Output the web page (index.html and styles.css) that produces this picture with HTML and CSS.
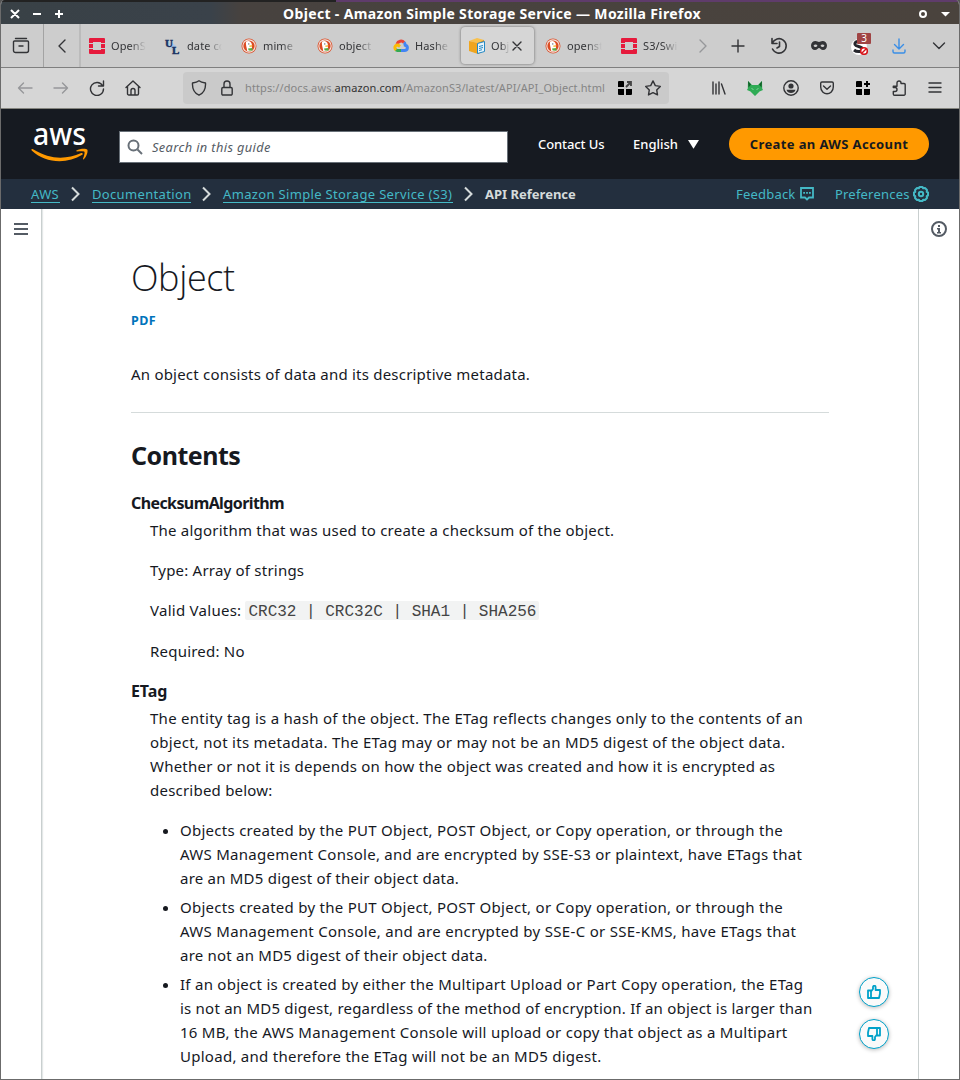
FILE: index.html
```html
<!DOCTYPE html>
<html lang="en">
<head>
<meta charset="utf-8">
<title>Object - Amazon Simple Storage Service</title>
<link rel="stylesheet" href="styles.css">
</head>
<body>
<svg class="defs" width="0" height="0">
  <symbol id="duck" viewBox="0 0 16 16"><circle cx="8" cy="8" r="7.500" fill="#d9512c"/><circle cx="8" cy="8" r="6.700" fill="#f3e6e0"/><circle cx="8" cy="8" r="5.600" fill="#dc4b22"/><path d="M5.200 3.600C7 2.400 10 3 10.800 6c.2 1.600-.2 2 .2 4l.2 2.500c-1.500 1-3.800 1-5.100.2C6 10 4.200 6 5.200 3.600z" fill="#fff"/><path d="M8.300 7.500l3.200-.3-.5 1.300-2.500.4z" fill="#f5b92d"/><path d="M7 10.500l4.500-.5-.2 2.800-3.600-.2z" fill="#57ab45"/><circle cx="7.800" cy="5.900" r=".6" fill="#345"/></symbol>
  <symbol id="openstack" viewBox="0 0 16 16"><path fill="#e61a3c" d="M1 0h14a1 1 0 0 1 1 1v4h-4V4H4v1H0V1a1 1 0 0 1 1-1zM0 6h4v4H0zM12 6h4v4h-4zM0 11h4v1h8v-1h4v4a1 1 0 0 1-1 1H1a1 1 0 0 1-1-1z"/></symbol>
</svg>
<div class="window">
  <div class="titlebar">
    <svg class="win-left" width="56" height="10" viewBox="0 0 56 10"><path d="M1 1l8 8M9 1L1 9M23 5h8M45 5h8M49 1v8" stroke="#fff" stroke-width="2" fill="none"/></svg>
    <div class="win-title">Object - Amazon Simple Storage Service — Mozilla Firefox</div>
    <svg class="win-right" width="32" height="10" viewBox="0 0 32 10"><circle cx="5" cy="5" r="3" stroke="#fff" stroke-width="2" fill="none"/><path d="M23 3h9l-4.500 4.500z" fill="#fff"/></svg>
  </div>

  <div class="tabbar">
    <div class="tab-view"><svg class="ic" width="18" height="18" viewBox="0 0 18 18"><path d="M3.500 1.500h11M2.500 4h13a1 1 0 0 1 1 1v8.500a2 2 0 0 1-2 2h-11a2 2 0 0 1-2-2V5a1 1 0 0 1 1-1zM7 9h4"/></svg></div>
    <div class="tab-prev"><svg class="ic" width="10" height="14" viewBox="0 0 10 14"><path d="M8 1L2 7l6 6"/></svg></div>
    <div class="tabs">
      <div class="tab"><svg width="16" height="16"><use href="#openstack"/></svg><span class="label">OpenS</span></div>
      <div class="tab"><svg class="ul" width="16" height="16" viewBox="0 0 16 16"><path d="M5 3l6 5-2 6-5-6z" fill="#a9c6e8"/><text x="0" y="8.500" class="ul-mark">U</text><text x="7" y="15.500" class="ul-mark">L</text></svg><span class="label">date co</span></div>
      <div class="tab"><svg width="16" height="16"><use href="#duck"/></svg><span class="label">mime</span></div>
      <div class="tab"><svg width="16" height="16"><use href="#duck"/></svg><span class="label">object</span></div>
      <div class="tab"><svg width="16" height="16" viewBox="0 0 16 16" fill="none" stroke-width="3"><path d="M4 6C5 3 9 2 11 4.500" stroke="#ea4335"/><path d="M11 4.500c1 .8 1 1.500 1.200 2.700 3 .6 3 5.300-.8 5.300H8" stroke="#4285f4"/><path d="M8 12.500H4.500l-2-.9" stroke="#34a853"/><path d="M3 12C1 10 2 6.500 5 7l2 1.500" stroke="#fbbc05"/></svg><span class="label">Hashe</span></div>
      <div class="tab active"><svg width="16" height="16" viewBox="0 0 16 16"><path d="M0 3l8-3 7 2-6 3z" fill="#f9c14d"/><path d="M0 3l9 2v11l-9-3z" fill="#f0a51e"/><path d="M9 5l6-3v11l-6 3z" fill="#d98c15"/><path d="M8.500 5.500l7-2v10l-7 2z" fill="#e8f5fc" stroke="#2489c5"/><path d="M10 8.500l4-1M10 10.500l4-1M10 12.500l3-.8" stroke="#2489c5"/></svg><span class="label">Obj</span><svg class="ic close" width="10" height="10" viewBox="0 0 10 10"><path d="M1 1l8 8M9 1L1 9"/></svg></div>
      <div class="tab"><svg width="16" height="16"><use href="#duck"/></svg><span class="label">openst</span></div>
      <div class="tab"><svg width="16" height="16"><use href="#openstack"/></svg><span class="label">S3/Swi</span></div>
    </div>
    <div class="tab-next"><svg class="ic dim" width="10" height="14" viewBox="0 0 10 14"><path d="M2 1l6 6-6 6"/></svg></div>
    <div class="tab-tools">
      <div><svg class="ic" width="14" height="14" viewBox="0 0 14 14"><path d="M7 1v12M1 7h12"/></svg></div>
      <div><svg class="ic" width="18" height="18" viewBox="0 0 18 18"><path d="M2 1.500v5h5M2.300 6.200A7.200 7.200 0 1 1 2.500 12M9.500 5v4.500L7 11" stroke-width="1.600"/></svg></div>
      <div><svg width="16" height="12" viewBox="0 0 16 12"><path fill="#333437" fill-rule="evenodd" d="M4.500 1C6 1 7 2 8 2s2-1 3.500-1C14 1 16 3 16 5.500S14.500 10 12 10c-2 0-3-2-4-2s-2 2-4 2C1.500 10 0 8 0 5.500S2 1 4.500 1zM2.500 5.700c1 1.800 3 1.700 4 .1C5.500 4 3.500 4 2.500 5.700zm11 0c-1-1.700-3-1.700-4 .1 1 1.600 3 1.700 4-.1z"/></svg></div>
      <div class="stylus"><svg width="18" height="18" viewBox="0 0 18 18"><circle cx="8" cy="10" r="8" fill="#fff"/><path d="M12 6C9 3 3 4.500 4 7.500 5 10 11 9 11.500 12S6 15.500 3 13" fill="none" stroke="#26262c" stroke-width="3"/><circle cx="13" cy="14" r="3.300" fill="#fff" stroke="#d7141a" stroke-width="1.600"/><path d="M11 16l4-4" stroke="#d7141a" stroke-width="1.500"/></svg><span class="badge">3</span></div>
      <div><svg class="ic blue" width="14" height="16" viewBox="0 0 14 16"><path d="M7 1v10M2.500 6.500L7 11l4.500-4.500M1 12v1.500A1.500 1.500 0 0 0 2.500 15h9a1.500 1.500 0 0 0 1.500-1.500V12"/></svg></div>
      <div><svg class="ic" width="14" height="8" viewBox="0 0 14 8"><path d="M1.500 1L7 6.500 12.500 1"/></svg></div>
    </div>
  </div>

  <div class="navbar">
    <div class="nav-left">
      <div><svg class="ic dim" width="16" height="12" viewBox="0 0 16 12"><path d="M15 6H1.500M6.500 1l-5 5 5 5"/></svg></div>
      <div><svg class="ic dim" width="16" height="12" viewBox="0 0 16 12"><path d="M1 6h13.500M9.500 1l5 5-5 5"/></svg></div>
      <div><svg class="ic" width="16" height="16" viewBox="0 0 16 16"><path d="M13.500 5.500A6.500 6.500 0 1 0 14.500 9M14.500 1v5h-5"/></svg></div>
      <div><svg class="ic" width="16" height="16" viewBox="0 0 16 16"><path d="M1 7.500L8 1l7 6.500M2.500 6.500v7.200a1.300 1.300 0 0 0 1.300 1.300h8.400a1.300 1.300 0 0 0 1.300-1.300V6.500M6 15v-4.500a2 2 0 0 1 4 0V15"/></svg></div>
    </div>
    <div class="urlbar">
      <svg class="ic" width="16" height="16" viewBox="0 0 16 16"><path d="M8 .8c2 1.500 4.500 1.900 6.500 2.200.3 5-1.500 10-6.500 12.200C3 13 1.200 8 1.500 3 3.500 2.700 6 2.300 8 .8z"/></svg>
      <svg class="ic" width="12" height="16" viewBox="0 0 12 16"><path d="M2 7.500h8a1.200 1.200 0 0 1 1.200 1.200v5.100A1.200 1.200 0 0 1 10 15H2a1.200 1.200 0 0 1-1.200-1.200V8.700A1.200 1.200 0 0 1 2 7.500zM3 7.500V4a3 3 0 0 1 6 0v3.500"/></svg>
      <div class="url">https://docs.aws.<b>amazon.com</b>/AmazonS3/latest/API/API_Object.html</div>
      <svg class="grid-ic" width="14" height="14" viewBox="0 0 14 14"><path d="M1 0h4a1 1 0 0 1 1 1v5H0V1a1 1 0 0 1 1-1zM0 8h6v6H1a1 1 0 0 1-1-1zM8 8h6v5a1 1 0 0 1-1 1H8z"/><path d="M8 6l5-5M9 1h4v4" fill="none" stroke="#444" stroke-width="1.800"/></svg>
      <svg class="ic" width="18" height="16" viewBox="0 0 18 16"><path d="M9 .9l2.300 4.700 5 .8-3.600 3.500.8 5L9 12.600 4.500 14.900l.8-5L1.700 6.400l5-.8z"/></svg>
    </div>
    <div class="nav-right">
      <div><svg class="ic" width="14" height="14" viewBox="0 0 14 14"><path d="M1 1v12M4 3v10M7 1v12M9.500 3l3.500 10"/></svg></div>
      <div><svg width="16" height="15" viewBox="0 0 16 15"><path d="M1 0l4 4h6l4-4 .2 7.500.8 1.500-3.500 1.500L8 15l-4.500-4.500L0 9l.8-1.500z" fill="#2fab55"/><path d="M1 0l3 3.500-2.500 3zM15 0l-3 3.500 2.500 3z" fill="#12602a"/><path d="M4.500 7.500L6.500 8.500M11.500 7.500L9.500 8.500" stroke="#7fd698"/></svg></div>
      <div><svg class="ic" width="16" height="16" viewBox="0 0 16 16"><circle cx="8" cy="8" r="7.200"/><circle cx="8" cy="6" r="2.600" fill="#333437" stroke="none"/><path d="M3.500 9.800h9C12 12 10 13 8 13s-4-1-4.500-3.200z" fill="#333437" stroke="none"/></svg></div>
      <div><svg class="ic" width="14" height="14" viewBox="0 0 14 14"><path d="M2 1h10a1.300 1.300 0 0 1 1.300 1.300V6C13.300 10 10 12.800 7 12.800S.7 10 .7 6V2.300A1.300 1.300 0 0 1 2 1zM3.500 5L7 8.300 10.500 5"/></svg></div>
      <div><svg class="grid-ic" width="14" height="14" viewBox="0 0 14 14"><path d="M1 0h4a1 1 0 0 1 1 1v5H0V1a1 1 0 0 1 1-1zM0 8h6v6H1a1 1 0 0 1-1-1zM8 8h6v5a1 1 0 0 1-1 1H8zM10 0h2v2h2v2h-2v2h-2V4H8V2h2z"/></svg></div>
      <div><svg class="ic" width="15" height="16" viewBox="0 0 15 16"><path d="M5 3.500V3a2 2 0 0 1 4 0v.5h3a1.200 1.200 0 0 1 1.200 1.200V14a1.200 1.200 0 0 1-1.200 1.200H2.500A1.200 1.200 0 0 1 1.300 14v-2.500H3a2 2 0 0 0 0-4H1.300V6.200H5z"/></svg></div>
      <div><svg class="ic" width="14" height="12" viewBox="0 0 14 12"><path d="M1 1h12M1 5.500h12M1 10h12"/></svg></div>
    </div>
  </div>

  <header class="masthead">
    <svg class="logo" width="58" height="38" viewBox="0 0 58 38"><text x="2" y="20" textLength="53" lengthAdjust="spacingAndGlyphs" class="logo-text">aws</text><path d="M.3 24.500c.3-.7 1-.7 1.700-.2C20 35 35 34.500 50.300 28c1.200-.5 2.200.8 1 1.800C36 39.500 14 38.500.7 25.500z" fill="#ff9900"/><path d="M45.500 25.500c3-2 9.500-2.400 10.700-1 1.200 1.500-.6 7.500-3.500 9.700-.5.400-1 .1-.7-.5 1-2.200 2-6 1.400-6.900-.8-.9-5-.6-7.400-.4-.8 0-1-.5-.5-.9z" fill="#ff9900"/></svg>
    <div class="search"><svg width="16" height="16" viewBox="0 0 16 16" fill="none" stroke="#687078" stroke-width="2"><circle cx="6.500" cy="6.500" r="5"/><path d="M10.500 10.500l4.500 4.500"/></svg><span>Search in this guide</span></div>
    <span class="contact">Contact Us</span>
    <span class="lang">English</span>
    <svg class="caret" width="11" height="9" viewBox="0 0 11 9"><path d="M0 0h11L5.500 8.800z" fill="#fff"/></svg>
    <div class="cta"><span>Create an AWS Account</span></div>
  </header>

  <nav class="crumbs">
    <a class="c1">AWS</a><svg class="sep" width="9" height="16" viewBox="0 0 9 16"><path d="M1 1.500L7.500 8 1 14.500"/></svg>
    <a class="c2">Documentation</a><svg class="sep" width="9" height="16" viewBox="0 0 9 16"><path d="M1 1.500L7.500 8 1 14.500"/></svg>
    <a class="c3">Amazon Simple Storage Service (S3)</a><svg class="sep" width="9" height="16" viewBox="0 0 9 16"><path d="M1 1.500L7.500 8 1 14.500"/></svg>
    <b>API Reference</b>
    <div class="crumb-tools">
      <span class="fb">Feedback</span><svg width="14" height="14" viewBox="0 0 14 14"><path d="M1 1h12v9.500H9l-2 2-2-2H1z" fill="none" stroke="#44b9c6" stroke-width="1.800"/><path d="M3.200 5h1.800v1.800H3.200zM6.100 5h1.800v1.800H6.100zM9 5h1.800v1.800H9z" fill="#44b9c6"/></svg>
      <span class="pref">Preferences</span><svg width="16" height="16" viewBox="0 0 16 16" fill="none" stroke="#44b9c6"><path stroke-width="2" stroke-linejoin="round" d="M6.500 1h3l.6 1.300 1.900-.3 2 2-.3 1.900 1.300.6v3l-1.300.6.3 1.900-2 2-1.900-.3-.6 1.300h-3l-.6-1.300-1.900.3-2-2 .3-1.900L1 9.500v-3l1.300-.6L2 4l2-2 1.900.3z"/><circle cx="8" cy="8" r="2.200" stroke-width="2"/></svg>
    </div>
  </nav>

  <div class="page">
    <aside class="rail left"><svg width="14" height="12" viewBox="0 0 14 12"><path d="M0 1h14M0 6h14M0 11h14" stroke="#545b64" stroke-width="2"/></svg></aside>
    <main>
      <h1>Object</h1>
      <a class="pdf">PDF</a>
      <p class="intro">An object consists of data and its descriptive metadata.</p>
      <h2>Contents</h2>
      <dl>
        <dt>ChecksumAlgorithm</dt>
        <dd>
          <p class="tight">The algorithm that was used to create a checksum of the object.</p>
          <p class="tight">Type: Array of strings</p>
          <p class="values"><span>Valid Values:</span><code>CRC32 | CRC32C | SHA1 | SHA256</code></p>
          <p class="tight">Required: No</p>
        </dd>
        <dt class="short">ETag</dt>
        <dd>
          <p>The entity tag is a hash of the object. The ETag reflects changes only to the contents of an<br>object, not its metadata. The ETag may or may not be an MD5 digest of the object data.<br><span class="tight">Whether or not it is depends on how the object was created and how it is encrypted as</span><br><span class="tight">described below:</span></p>
          <ul>
            <li>Objects created by the PUT Object, POST Object, or Copy operation, or through the<br>AWS Management Console, and are encrypted by SSE-S3 or plaintext, have ETags that<br><span class="tight">are an MD5 digest of their object data.</span></li>
            <li>Objects created by the PUT Object, POST Object, or Copy operation, or through the<br><span class="loose">AWS Management Console, and are encrypted by SSE-C or SSE-KMS, have ETags that</span><br><span class="tight">are not an MD5 digest of their object data.</span></li>
            <li>If an object is created by either the Multipart Upload or Part Copy operation, the ETag<br><span class="tight">is not an MD5 digest, regardless of the method of encryption. If an object is larger than</span><br>16 MB, the AWS Management Console will upload or copy that object as a Multipart<br>Upload, and therefore the ETag will not be an MD5 digest.</li>
          </ul>
        </dd>
      </dl>
    </main>
    <aside class="rail right"><svg width="16" height="16" viewBox="0 0 16 16"><circle cx="8" cy="8" r="7" fill="none" stroke="#545b64" stroke-width="2"/><path d="M7 4h2v2H7zM6 7h3v4h1v1.500H6V11h1V8.500H6z" fill="#545b64"/></svg></aside>
    <div class="votes">
      <div class="vote"><svg width="14" height="14" viewBox="0 0 14 14"><path d="M1 5.500h3V13H1zM4 6.500L6 4V2a1.300 1.300 0 0 1 2.600 0v3H13v3.500l-1 4.500H4"/></svg></div>
      <div class="vote"><svg width="14" height="14" viewBox="0 0 14 14"><path d="M13 8.500h-3V1h3zM10 7.500L8 10v2a1.300 1.300 0 0 1-2.600 0V9H1V5.500L2 1h8"/></svg></div>
    </div>
  </div>
</div>
</body>
</html>
```
FILE: styles.css
```css
* { box-sizing: border-box; }
body { margin: 0; background: #555; font-family: "Noto Sans", sans-serif; }
svg { display: block; flex: none; }
.defs { position: absolute; }
.window { width: 960px; height: 1080px; border: 1px solid #6b6b6b; border-top: 0; border-radius: 5px 5px 0 0; overflow: hidden; background: #fff; display: flex; flex-direction: column; }

.titlebar { height: 24px; flex: none; display: flex; align-items: center; padding: 2px 9px 0; background: linear-gradient(90deg, #394146 0, #3a424a 210px, #47423f 240px, #4a433d 100%); border-top: 2px solid #5a3b66; border-image: linear-gradient(90deg, #222 35%, #5f3c6b 35%) 1; color: #fff; }
.win-title { flex: 1; padding-left: 6px; text-align: center; font-weight: 700; font-size: 14px; line-height: 20px; letter-spacing: .34px; white-space: nowrap; }
.win-right { margin-left: 6px; }

.ic { fill: none; stroke: #333437; stroke-width: 1.400; stroke-linecap: round; stroke-linejoin: round; }
.ic.dim { stroke: #96979a; }
.ic.blue { stroke: #3a8ee6; }
.tabbar { height: 44px; flex: none; display: flex; background: #cdcdcd; border-bottom: 1px solid #7f7f7f; }
.tab-view, .tab-prev, .tab-next { display: flex; align-items: center; justify-content: center; }
.tab-view { width: 43px; padding-right: 2px; border-right: 1px solid #a3a3a3; }
.tab-prev { width: 37px; border-right: 2px solid #bbb; }
.tabs { display: flex; }
.tab { width: 76px; height: 43px; padding-left: 8px; display: flex; align-items: center; gap: 6px; }
.label { width: 38px; white-space: nowrap; font-size: 11px; letter-spacing: .1px; color: #333437; -webkit-mask-image: linear-gradient(90deg, #000 50%, transparent 92%); mask-image: linear-gradient(90deg, #000 50%, transparent 92%); }
.active { width: 73px; height: 37px; margin: 3px 3px 3px 0; background: #d6d6d6; border-radius: 4px; box-shadow: 0 0 3px #666; }
.active .label { width: 20px; }
.close { margin-left: -5px; }
.ul { overflow: visible; }
.ul-mark { font: 700 11px "Liberation Serif", serif; fill: #1a3263; stroke: #1a3263; stroke-width: .5; }
.tab-next { width: 27px; }
.tab-tools { display: grid; grid-template-columns: 44px 38px 42px 40px 38px 41px; align-items: center; justify-items: center; }
.stylus { position: relative; }
.badge { position: absolute; left: 6px; top: -4px; width: 14px; height: 11px; background: #a04444; color: #fff; font-size: 10px; line-height: 11px; text-align: center; border-radius: 1px; }

.navbar { height: 41px; flex: none; display: flex; align-items: center; background: #d6d6d6; border-bottom: 1px solid #85857f; }
.nav-left { display: grid; grid-template-columns: repeat(4, 36px); justify-items: center; align-items: center; width: 176px; padding-left: 6px; }
.urlbar { width: 486px; height: 32px; margin-left: 6px; border-radius: 4px; background: #cacaca; display: flex; align-items: center; padding-left: 8px; }
.urlbar .ic + .ic { margin-left: 14px; }
.url { width: 361px; margin: 0 12px 0 12px; padding-bottom: 1px; font-size: 11px; letter-spacing: .1px; color: #858585; white-space: nowrap; }
.url b { font-weight: 400; color: #333; }
.urlbar .grid-ic + .ic { margin-left: 12px; }
.nav-right { display: grid; grid-template-columns: repeat(7, 36px); justify-items: center; align-items: center; margin-left: 32px; }

.masthead { height: 70px; flex: none; background: #161a21; display: flex; align-items: center; color: #fff; font-size: 13px; font-weight: 500; white-space: nowrap; }
.logo { margin-left: 30px; overflow: visible; }
.logo-text { font: 500 31px "Noto Sans", sans-serif; fill: #fff; }
.search { width: 389px; height: 32px; margin: 6px 0 0 30px; padding: 0 7px; display: flex; align-items: center; gap: 9px; background: #fff; border: 1px solid #687078; color: #545b64; font-style: italic; font-weight: 400; letter-spacing: .05px; }
.search span { letter-spacing: .4px; }
.search span { letter-spacing: .38px; font-size: 12.800px; }
.contact { width: 67px; margin-left: 30px; letter-spacing: -.1px; }
.lang { width: 45px; margin-left: 28px; }
.caret { margin-left: 10px; }
.cta { width: 200px; height: 32px; margin-left: 30px; border-radius: 16px; background: #ff9900; color: #16191f; font-weight: 700; display: flex; align-items: center; justify-content: center; letter-spacing: .38px; }

.crumbs { height: 30px; flex: none; background: #232f3e; display: flex; align-items: center; color: #44b9c6; font-size: 13px; white-space: nowrap; padding-left: 30px; }
.crumbs a { border-bottom: 1px solid #44b9c6; line-height: 16px; letter-spacing: .34px; }
.c1 { width: 29px; } .c2 { width: 99px; } .c3 { width: 230px; }
.sep { fill: none; stroke: #d5dbdb; stroke-width: 2; margin: 0 12px 0 11px; }
.crumbs b { color: #d5dbdb; }
.crumb-tools { margin-left: auto; margin-right: 30px; display: flex; align-items: center; letter-spacing: .2px; }
.fb { width: 60px; margin-right: 4px; }
.pref { width: 74px; margin: 0 4px 0 21px; }

.page { flex: 1; min-height: 0; display: flex; position: relative; color: #16191f; overflow: hidden; }
.rail { width: 41px; padding-top: 14px; display: flex; flex-direction: column; align-items: center; }
.left { border-right: 1px solid #c9cfcf; box-shadow: 1px 0 1px #e4e8e8; }
.right { border-left: 1px solid #c9cfcf; padding-top: 12px; }
main { flex: 1; padding: 48px 89px 0; font-size: 15px; line-height: 24px; letter-spacing: .27px; white-space: nowrap; }
h1 { margin: 0; font: 300 36px/42px "Open Sans", "Noto Sans", sans-serif; letter-spacing: -.4px; }
.pdf { display: block; margin-top: 10px; font-size: 12.500px; font-weight: 700; color: #0073bb; line-height: 24px; letter-spacing: .4px; }
p { margin: 0; }
.intro { margin-top: 29px; padding-bottom: 26px; border-bottom: 1px solid #d5dbdb; letter-spacing: .21px; }
h2 { margin: 26px 0 0; font-size: 25px; line-height: 32px; letter-spacing: -.5px; }
dl { margin: 20px 0 0; }
dt { font-weight: 700; font-size: 16px; height: 27px; letter-spacing: -.6px; }
.short { letter-spacing: -.1px; }
dd { margin: 0 0 16px 19px; }
dd p + p { margin-top: 16px; }
.values { display: flex; height: 25px; }
.values code { margin-left: 4px; height: 19px; margin-top: 3px; padding: 2px 3px 0; border-radius: 2px; background: #f2f3f3; color: #444; font: 16px/17px "Liberation Mono", monospace; line-height: 19px; letter-spacing: 0; }
ul { margin: 16px 0 0; padding-left: 30px; }
li { margin-bottom: 5px; }
.tight { letter-spacing: .22px; }
.loose { letter-spacing: .31px; }
.votes { position: absolute; left: 858px; top: 768px; display: grid; gap: 12px; }
.vote { width: 30px; height: 30px; border: 1px solid #00a1c9; border-radius: 50%; background: #fafafa; box-shadow: 0 1px 4px #bbb; display: flex; align-items: center; justify-content: center; }
.vote path { fill: none; stroke: #00a1c9; stroke-width: 1.800; stroke-linejoin: round; }
```
